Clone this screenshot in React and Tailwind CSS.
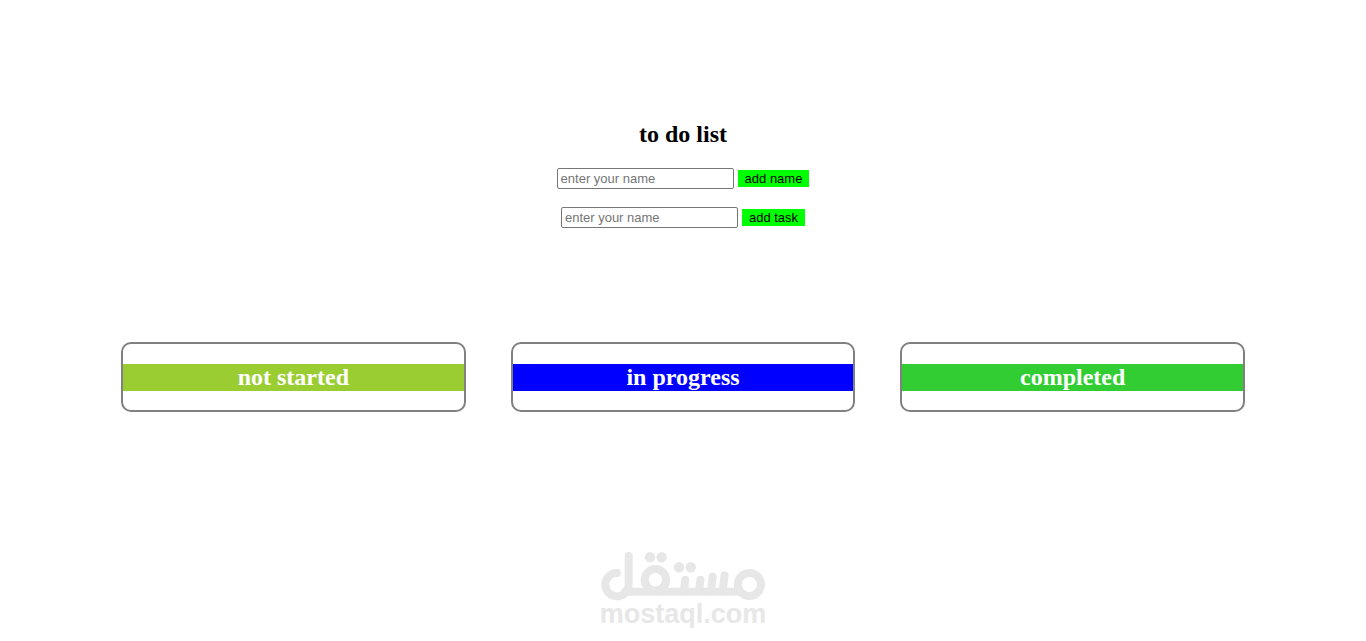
const columns = [
  { title: 'not started', color: 'bg-[#9acd32]' },
  { title: 'in progress', color: 'bg-[#0000ff]' },
  { title: 'completed', color: 'bg-[#32cd32]' },
]

function EntryForm({ id, label }) {
  return (
    <form
      className="flex items-center justify-center gap-1 font-['Liberation_Sans',Arial,sans-serif] text-[13px] leading-[15px]"
      onSubmit={(e) => e.preventDefault()}
    >
      <input
        id={id}
        type="text"
        aria-label={label}
        placeholder="enter your name"
        className="w-[177px] rounded-xs border border-[#767676] bg-white px-[3px] py-[2px] text-black placeholder:text-[#757575]"
      />
      <button type="submit" className="bg-[#00ff00] px-[7px] py-px text-black">
        {label}
      </button>
    </form>
  )
}

function Column({ title, color }) {
  return (
    <section className="rounded-[10px] border-2 border-[#808080] pt-5 pb-[19px]">
      <h2 className={`${color} text-center text-2xl leading-[27px] font-bold text-white`}>{title}</h2>
    </section>
  )
}

function Brand() {
  return (
    <div className="flex flex-col items-center text-[#e7e7e7]">
      <svg
        width="166"
        height="50"
        viewBox="0 0 166 50"
        fill="none"
        stroke="currentColor"
        strokeWidth="8"
        strokeLinecap="round"
        strokeLinejoin="round"
        aria-hidden="true"
      >
        <path d="M16.8 22A11.7 11.7 0 1 0 28.7 33.4V5" />
        <path d="M25 40.8H140" />
        <circle cx="55.4" cy="28.8" r="10.7" />
        <circle cx="149.4" cy="33.5" r="11.6" />
        <path d="M85.2 28.8L84 40M100.5 28.8L99 40M112.7 25.6L111 40M124.6 24.4L122.6 40" />
        <g fill="currentColor" stroke="none">
          <circle cx="50" cy="6.2" r="5.2" />
          <circle cx="61.6" cy="6.2" r="5.2" />
          <circle cx="79" cy="16.2" r="5.2" />
          <circle cx="90.7" cy="16.2" r="5.2" />
        </g>
      </svg>
      <span className="font-['Liberation_Sans',Arial,sans-serif] text-[27px] leading-[27px] font-bold">
        mostaql.com
      </span>
    </div>
  )
}

export default function App() {
  return (
    <main className="bg-white px-[121px] pt-[121px] font-['Liberation_Serif','Times_New_Roman',serif] text-black">
      <h1 className="mb-5 text-center text-2xl leading-[27px] font-bold">to do list</h1>
      <div className="flex flex-col gap-[18px]">
        <EntryForm id="name" label="add name" />
        <EntryForm id="task" label="add task" />
      </div>
      <div className="mt-[114px] grid grid-cols-3 gap-[45px]">
        {columns.map((column) => (
          <Column key={column.title} title={column.title} color={column.color} />
        ))}
      </div>
      <footer className="mt-[139px]">
        <Brand />
      </footer>
    </main>
  )
}
